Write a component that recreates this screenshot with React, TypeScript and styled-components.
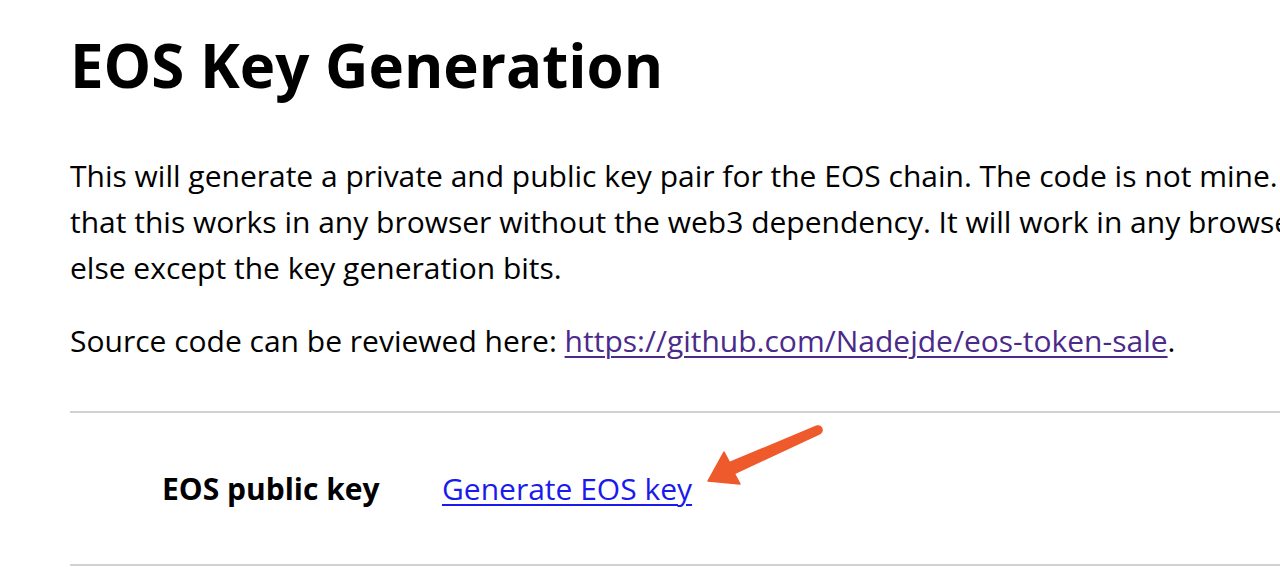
import React from 'react'
import styled, { createGlobalStyle } from 'styled-components'

const GlobalStyle = createGlobalStyle`
	html, body {
		margin: 0;
		padding: 0;
		background: #ffffff;
		overflow: hidden;
	}
	body {
		font-family: 'Open Sans', 'Noto Sans', sans-serif;
		color: #000000;
	}
`

const App: React.FC = () => {
	return (
		<>
			<GlobalStyle />
			<StyledPage>
				<StyledTitle>EOS Key Generation</StyledTitle>
				<StyledIntro>
					This will generate a private and public key pair for the EOS chain. The code is not mine. I just modified it so
					<br />
					that this works in any browser without the web3 dependency. It will work in any browser and it doesn't do anything
					<br />
					else except the key generation bits.
				</StyledIntro>
				<StyledSource>
					Source code can be reviewed here:{' '}
					<StyledLink href="#" $visited>
						https://github.com/Nadejde/eos-token-sale
					</StyledLink>
					.
				</StyledSource>
				<StyledRule />
				<StyledKeyRow>
					<StyledKeyLabel>EOS public key</StyledKeyLabel>
					<StyledKeyValue>
						<StyledLink href="#">Generate EOS key</StyledLink>
						{/* hand-drawn pointer over the link */}
						<StyledArrow width="130" height="70" viewBox="0 0 130 70">
							<path
								d="M8 61 L24 32 L29.6 42.5 L116.4 6.3 A4 4 0 0 1 119.6 13.7 L34.4 53.5 L40 64 Z"
								fill="#ee5a2c"
								stroke="#ee5a2c"
								strokeWidth="1.5"
								strokeLinejoin="round"
							/>
						</StyledArrow>
					</StyledKeyValue>
				</StyledKeyRow>
				<StyledRule />
			</StyledPage>
		</>
	)
}

const StyledPage = styled.div`
	box-sizing: border-box;
	width: 1600px;
	padding: 24px 0 0 70px;
`

const StyledTitle = styled.h1`
	font-size: 60px;
	font-weight: 700;
	line-height: 82px;
	margin: 0 0 47px;
	padding: 0;
`

const StyledIntro = styled.p`
	font-size: 30px;
	font-weight: 400;
	line-height: 46px;
	margin: 0 0 27px;
	white-space: nowrap;
`

const StyledSource = styled.p`
	font-size: 30px;
	font-weight: 400;
	line-height: 46px;
	margin: 0 0 47px;
	white-space: nowrap;
`

const StyledLink = styled.a<{ $visited?: boolean }>`
	color: ${(props) => (props.$visited ? '#4b2a8a' : '#1a1aee')};
	text-decoration: underline;
	text-decoration-thickness: 2px;
	text-underline-offset: 4px;
`

const StyledRule = styled.div`
	height: 2px;
	background: #d2d2d2;
	width: 1530px;
`

const StyledKeyRow = styled.div`
	display: flex;
	align-items: center;
	height: 151px;
	padding-left: 92px;
	font-size: 30px;
	line-height: 46px;
`

const StyledKeyLabel = styled.div`
	font-weight: 700;
	width: 280px;
`

const StyledKeyValue = styled.div`
	position: relative;
`

const StyledArrow = styled.svg`
	position: absolute;
	left: 258px;
	top: -46px;
`

export default App
